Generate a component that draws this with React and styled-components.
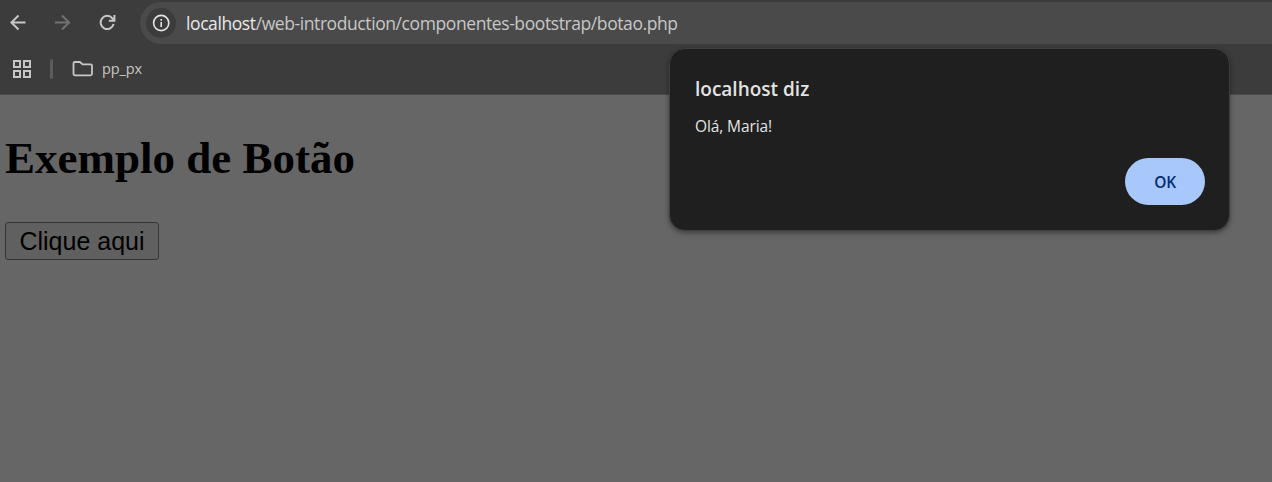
import React from "react";
import styled, { createGlobalStyle } from "styled-components";

const GlobalStyle = createGlobalStyle`
  *, *::before, *::after { box-sizing: border-box; }
  body { margin: 0; background: #666666; overflow: hidden; }
`;

const Window = styled.div`
  position: relative;
  display: flex;
  flex-direction: column;
  height: 482px;
  overflow: hidden;
  background: #666666;
  font-family: "Open Sans", sans-serif;
`;

const Toolbar = styled.header`
  display: flex;
  height: 44px;
  padding-top: 2px;
  background: #3c3c3c;
`;

const Navigation = styled.nav`
  display: flex;
  align-items: center;
  gap: 21px;
  width: 140px;
  padding-left: 6px;
`;

const Icon = styled.svg`
  display: block;
  flex: none;
  width: ${(p) => p.$w || 24}px;
  height: ${(p) => p.$h || p.$w || 24}px;
  fill: none;
  stroke: ${(p) => p.$color || "#c7c7c7"};
  stroke-width: ${(p) => p.$stroke || 2};
`;

const AddressBar = styled.div`
  display: flex;
  flex: 1;
  align-items: center;
  gap: 10px;
  height: 42px;
  padding-left: 6px;
  border-radius: 21px 0 0 21px;
  background: #4a4a4a;
`;

const SiteInfo = styled.span`
  display: flex;
  align-items: center;
  justify-content: center;
  width: 30px;
  height: 30px;
  border-radius: 50%;
  background: #3c3c3c;
`;

const Url = styled.span`
  color: #c7c7c7;
  font-size: 17.5px;
  line-height: 24px;
  letter-spacing: -0.41px;
  white-space: nowrap;
`;

const Host = styled.span`
  color: #e9e9e9;
`;

const Bookmarks = styled.div`
  display: flex;
  align-items: center;
  height: 51px;
  padding-left: 12px;
  border-bottom: 1px solid #4a4a4a;
  background: #3c3c3c;
`;

const Separator = styled.span`
  width: 3px;
  height: 20px;
  margin: 0 19px 0 18px;
  border-radius: 2px;
  background: #5c5c5c;
`;

const BookmarkLabel = styled.span`
  margin-left: 8px;
  color: #c7c7c7;
  font-size: 14.5px;
  line-height: 20px;
  letter-spacing: -0.1px;
`;

const Page = styled.main`
  flex: 1;
  padding: 36px 5px 0;
`;

const Heading = styled.h1`
  margin: 0 0 37px;
  font: bold 45px/54px "Liberation Serif", serif;
  color: #000;
  white-space: nowrap;
`;

const PageButton = styled.button`
  display: block;
  width: 154px;
  height: 38px;
  padding: 0;
  border: 1px solid #363636;
  border-radius: 3px;
  background: #606060;
  color: #000;
  font: 25px/36px "Liberation Sans", sans-serif;
  white-space: nowrap;
`;

const Dialog = styled.section`
  position: absolute;
  top: 48px;
  left: 669px;
  display: flex;
  flex-direction: column;
  width: 561px;
  height: 183px;
  padding: 26px 24px 25px 25px;
  border: 1px solid #3f3f3f;
  border-radius: 16px;
  background: #1f1f1f;
  box-shadow: 0 2px 5px rgba(0, 0, 0, 0.4);
`;

const DialogTitle = styled.h2`
  margin: 0;
  color: #e3e3e3;
  font-size: 19px;
  font-weight: 600;
  line-height: 28px;
  letter-spacing: 0;
`;

const DialogMessage = styled.p`
  margin: 12px 0 0;
  color: #e3e3e3;
  font-size: 15.5px;
  line-height: 22px;
  letter-spacing: -0.1px;
`;

const ConfirmButton = styled.button`
  align-self: flex-end;
  width: 80px;
  height: 47px;
  margin-top: auto;
  padding: 1px 0 0;
  border: 0;
  border-radius: 24px;
  background: #a8c7fa;
  color: #062e6f;
  font: 600 15.5px/20px "Open Sans", sans-serif;
  letter-spacing: -0.3px;
`;

export default function App() {
  return (
    <Window>
      <GlobalStyle />
      <Toolbar>
        <Navigation>
          <Icon viewBox="0 0 24 24">
            <path d="M19.5 11.5H5.5M12.5 4.5L5.4 11.5L12.5 18.5" />
          </Icon>
          <Icon viewBox="0 0 24 24" $color="#727272">
            <path d="M4 11.5H18M11 4.5L18.1 11.5L11 18.5" />
          </Icon>
          <Icon viewBox="0 0 24 24">
            <path d="M17.6 13.1A6.6 6.6 0 1 1 16.4 7.4L18.2 9.5M18.4 4V9.7H12.8" />
          </Icon>
        </Navigation>
        <AddressBar>
          <SiteInfo>
            <Icon viewBox="0 0 20 20" $w={20} $color="#e3e3e3" $stroke={1.6}>
              <circle cx="10.2" cy="10" r="7.6" />
              <path d="M10.2 9V14M10.2 6V7.8" />
            </Icon>
          </SiteInfo>
          <Url>
            <Host>localhost</Host>/web-introduction/componentes-bootstrap/botao.php
          </Url>
        </AddressBar>
      </Toolbar>
      <Bookmarks>
        <Icon viewBox="0 0 20 20" $w={20}>
          <path d="M2 2H8V8H2ZM12 2H18V8H12ZM2 12H8V18H2ZM12 12H18V18H12Z" />
        </Icon>
        <Separator />
        <Icon viewBox="0 0 22 18" $w={22} $h={18} $stroke={1.8}>
          <path d="M3 2H8L10.5 4.3H18.5Q20 4.3 20 5.8V13.8Q20 15.3 18.5 15.3H3Q1.5 15.3 1.5 13.8V3.5Q1.5 2 3 2Z" />
        </Icon>
        <BookmarkLabel>pp_px</BookmarkLabel>
      </Bookmarks>
      <Page>
        <Heading>Exemplo de Botão</Heading>
        <PageButton>Clique aqui</PageButton>
      </Page>
      <Dialog role="dialog">
        <DialogTitle>localhost diz</DialogTitle>
        <DialogMessage>Olá, Maria!</DialogMessage>
        <ConfirmButton>OK</ConfirmButton>
      </Dialog>
    </Window>
  );
}
